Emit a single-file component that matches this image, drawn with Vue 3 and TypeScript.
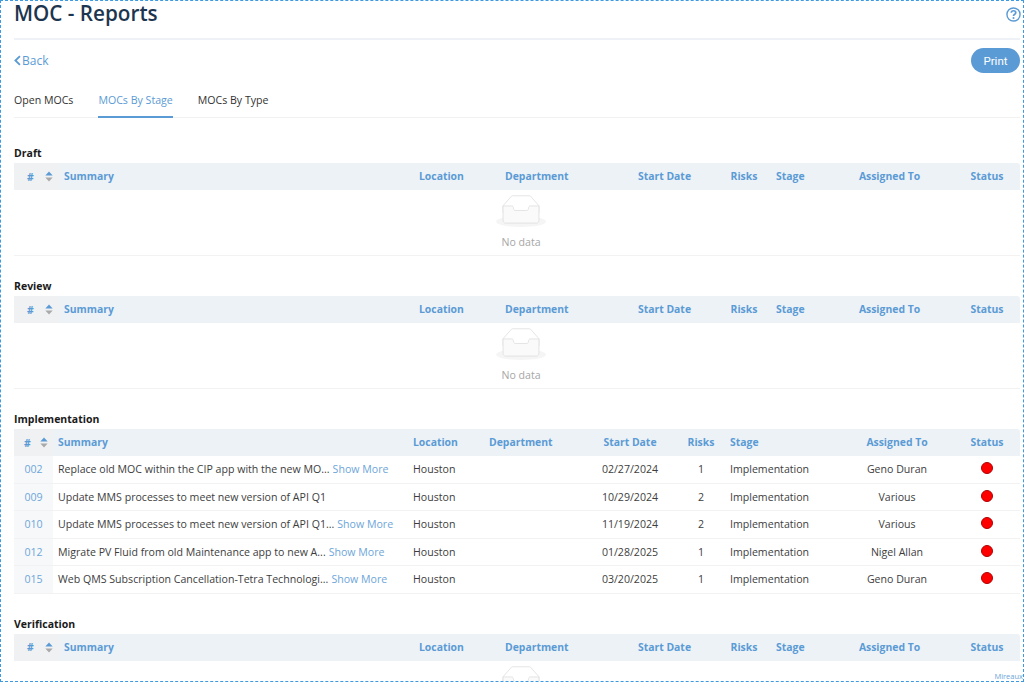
<template>
  <div class="page">
    <header class="top-bar">
      <h1 class="title">MOC - Reports</h1>
      <svg class="help" viewBox="0 0 16 16" fill="none">
        <circle cx="8" cy="8" r="7" stroke="currentColor" stroke-width="1.5" />
        <path
          d="M5.6 6.2C5.7 4.8 6.7 4 8 4C9.4 4 10.4 4.9 10.4 6.1C10.4 7.8 8 7.8 8 9.6"
          stroke="currentColor"
          stroke-width="1.8"
        />
        <circle cx="8" cy="11.8" r="1.1" fill="currentColor" />
      </svg>
    </header>

    <div class="action-row">
      <a class="back">
        <svg class="back-icon" viewBox="0 0 8 12" fill="none">
          <path d="M6.8 1L1.6 6L6.8 11" stroke="currentColor" stroke-width="2.1" />
        </svg>
        Back
      </a>
      <button class="print">Print</button>
    </div>

    <nav class="tabs">
      <a v-for="tab in tabs" :key="tab" class="tab" :class="{ active: tab === activeTab }">{{ tab }}</a>
    </nav>

    <section v-for="stage in stages" :key="stage.name" class="stage">
      <h2 class="stage-name">{{ stage.name }}</h2>
      <div class="table" :class="stage.rows.length ? 'table-data' : 'table-empty'">
        <div class="row head">
          <div class="cell num">
            <span>#</span>
            <svg class="sort" viewBox="0 0 8 12">
              <path d="M4 0.5L8 5H0Z" fill="#5b9bd5" />
              <path d="M4 11.5L0 7H8Z" fill="#a9a9a9" />
            </svg>
          </div>
          <div class="cell summary">Summary</div>
          <div class="cell">Location</div>
          <div class="cell">Department</div>
          <div class="cell center">Start Date</div>
          <div class="cell center">Risks</div>
          <div class="cell stage-col">Stage</div>
          <div class="cell center">Assigned To</div>
          <div class="cell center">Status</div>
        </div>

        <template v-if="stage.rows.length">
          <div v-for="row in stage.rows" :key="row.id" class="row body">
            <div class="cell num"><a class="id">{{ row.id }}</a></div>
            <div class="cell summary">
              {{ row.summary }}<a v-if="row.more" class="more">Show More</a>
            </div>
            <div class="cell">Houston</div>
            <div class="cell"></div>
            <div class="cell center">{{ row.start }}</div>
            <div class="cell center">{{ row.risks }}</div>
            <div class="cell stage-col">{{ stage.name }}</div>
            <div class="cell center">{{ row.assigned }}</div>
            <div class="cell center"><span class="dot"></span></div>
          </div>
        </template>

        <div v-else class="empty">
          <svg class="empty-icon" viewBox="0 0 64 41">
            <g transform="translate(0 1)" fill="none" fill-rule="evenodd">
              <ellipse fill="#f5f5f5" cx="32" cy="33" rx="32" ry="7" />
              <g fill-rule="nonzero" stroke="#dedede">
                <path d="M55 12.76L44.854 1.258C44.367.474 43.656 0 42.907 0H21.093c-.749 0-1.46.474-1.947 1.257L9 12.761V22h46v-9.24z" />
                <path
                  d="M41.613 15.931c0-1.605.994-2.93 2.227-2.931H55v18.137C55 33.26 53.68 35 52.05 35h-40.1C10.32 35 9 33.259 9 31.137V13h11.16c1.233 0 2.227 1.323 2.227 2.928v.022c0 1.605 1.005 2.901 2.237 2.901h14.752c1.232 0 2.237-1.308 2.237-2.913v-.007z"
                  fill="#fafafa"
                />
              </g>
            </g>
          </svg>
          <p class="empty-text">No data</p>
        </div>
      </div>
    </section>

    <span class="credit">Mireaux</span>
  </div>
</template>

<script setup lang="ts">
interface MocRow {
  id: string
  summary: string
  more: boolean
  start: string
  risks: number
  assigned: string
}

interface Stage {
  name: string
  rows: MocRow[]
}

const tabs = ['Open MOCs', 'MOCs By Stage', 'MOCs By Type']
const activeTab = 'MOCs By Stage'

const stages: Stage[] = [
  { name: 'Draft', rows: [] },
  { name: 'Review', rows: [] },
  {
    name: 'Implementation',
    rows: [
      { id: '002', summary: 'Replace old MOC within the CIP app with the new MO...', more: true, start: '02/27/2024', risks: 1, assigned: 'Geno Duran' },
      { id: '009', summary: 'Update MMS processes to meet new version of API Q1', more: false, start: '10/29/2024', risks: 2, assigned: 'Various' },
      { id: '010', summary: 'Update MMS processes to meet new version of API Q1...', more: true, start: '11/19/2024', risks: 2, assigned: 'Various' },
      { id: '012', summary: 'Migrate PV Fluid from old Maintenance app to new A...', more: true, start: '01/28/2025', risks: 1, assigned: 'Nigel Allan' },
      { id: '015', summary: 'Web QMS Subscription Cancellation-Tetra Technologi...', more: true, start: '03/20/2025', risks: 1, assigned: 'Geno Duran' },
    ],
  },
  { name: 'Verification', rows: [] },
]
</script>

<style scoped>
.page {
  position: relative;
  box-sizing: border-box;
  height: 682px;
  padding: 0 3px 0 13px;
  overflow: hidden;
  border: 1px dashed #3b9ae1;
  background: #fff;
  font-family: 'Open Sans', 'Noto Sans', sans-serif;
  font-size: 10.6px;
  color: #3d3d3d;
}

.top-bar {
  display: flex;
  justify-content: space-between;
  height: 37px;
  border-bottom: 2px solid #eef2f6;
}

.title {
  margin: 0;
  font-size: 20.7px;
  line-height: 24px;
  font-weight: 600;
  color: #1d3650;
}

.help {
  width: 15px;
  height: 15px;
  margin: 6px -1px 0 0;
  color: #5b9bd5;
}

.action-row {
  display: flex;
  justify-content: space-between;
  align-items: center;
  height: 25px;
  margin-top: 8px;
}

.back {
  display: flex;
  align-items: center;
  gap: 1px;
  font-size: 12px;
  color: #5b9bd5;
}

.back-icon {
  width: 7px;
  height: 11px;
}

.print {
  width: 49px;
  height: 25px;
  padding: 0;
  border: none;
  border-radius: 13px;
  background: #5b9bd5;
  color: #fff;
  font-family: Roboto, sans-serif;
  font-size: 11.5px;
}

.tabs {
  display: flex;
  gap: 25px;
  height: 31px;
  margin-top: 13px;
  border-bottom: 1px solid #f1f1f1;
}

.tab {
  box-sizing: border-box;
  height: 32px;
  padding-top: 7px;
  line-height: 15px;
  color: #333;
}

.tab.active {
  border-bottom: 2px solid #5b9bd5;
  color: #5b9bd5;
}

.stage {
  margin-top: 23px;
}

.tabs + .stage {
  margin-top: 28px;
}

.stage-name {
  margin: 0 0 3px;
  font-size: 10.5px;
  line-height: 14px;
  font-weight: 700;
  color: #1a1a1a;
}

.table-empty {
  --cols: 46px 355px 86px 103px 121px 38px 62px 129px 66px;
}

.table-data {
  --cols: 39px 356px 76px 90px 110px 32px 123px 114px 66px;
}

.row {
  display: grid;
  grid-template-columns: var(--cols);
  align-items: center;
}

.head {
  height: 27px;
  border-radius: 3px 3px 0 0;
  background: #edf2f7;
  font-size: 10.4px;
  font-weight: 700;
  color: #5b9bd5;
}

.head .cell:not(.num) {
  position: relative;
  top: -0.5px;
}

.body {
  box-sizing: border-box;
  height: 27.5px;
  border-bottom: 1px solid #f2f2f2;
}

.cell {
  padding-left: 4px;
  white-space: nowrap;
}

.table-data .summary {
  padding-left: 5px;
}

.center {
  padding-left: 0;
  text-align: center;
}

.stage-col {
  padding-left: 13px;
}

.num {
  display: flex;
  align-items: center;
  align-self: stretch;
  justify-content: center;
  padding-left: 0;
  background: #f7f8f9;
}

.head .num {
  position: relative;
  justify-content: flex-start;
  padding-left: 13px;
  background: #eff1f3;
}

.table-data .head .num {
  padding-left: 10px;
}

.sort {
  position: absolute;
  right: 7px;
  top: 8px;
  width: 8px;
  height: 11px;
}

.table-data .sort {
  right: 5px;
}

.id,
.more {
  color: #6ea6da;
}

.more {
  margin-left: 3px;
}

.dot {
  display: inline-block;
  box-sizing: border-box;
  width: 12px;
  height: 12px;
  margin-bottom: 3px;
  border: 1px solid #b00000;
  border-radius: 50%;
  background: #f00;
  vertical-align: middle;
}

.empty {
  display: flex;
  flex-direction: column;
  align-items: center;
  box-sizing: border-box;
  height: 66px;
  padding: 5px 0 0 8px;
  border-bottom: 1px solid #f2f2f2;
}

.empty-icon {
  width: 50px;
  height: 32px;
}

.empty-text {
  margin: 8px 0 0;
  line-height: 15px;
  color: #a6a6a6;
}

.credit {
  position: absolute;
  right: 0;
  bottom: 0;
  font-size: 7.5px;
  line-height: 10px;
  color: #6ea6da;
}
</style>
